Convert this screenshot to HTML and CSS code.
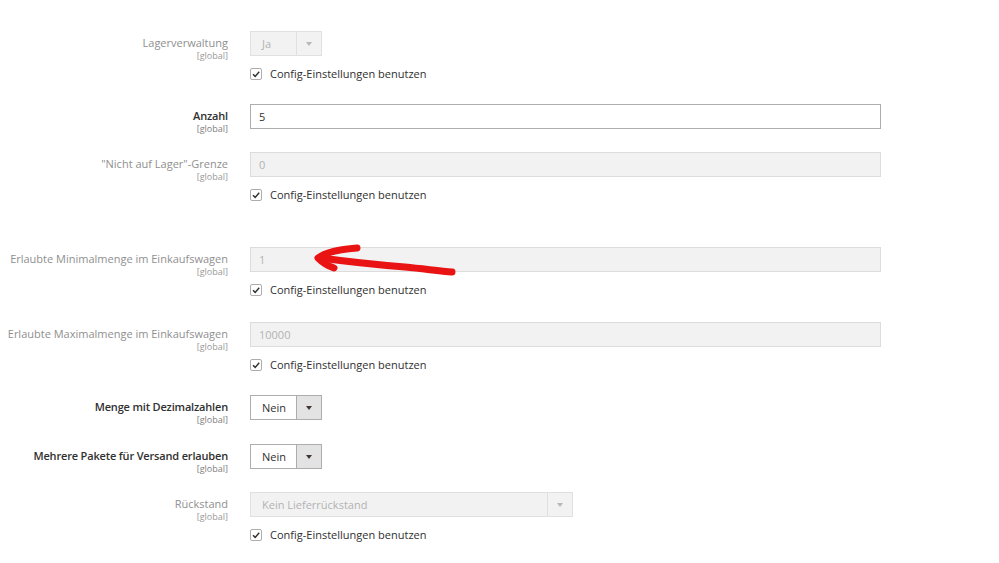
FILE: index.html
```html
<!DOCTYPE html>
<html lang="de">
<head>
<meta charset="utf-8">
<title>Lager</title>
<link rel="stylesheet" href="styles.css">
</head>
<body>
<div class="form">
  <div class="field disabled">
    <div class="label"><span class="title">Lagerverwaltung</span><span class="scope">[global]</span></div>
    <div class="control">
      <div class="select small"><span class="value">Ja</span><span class="arrow"></span></div>
      <label class="use-config"><span class="cb"><svg viewBox="0 0 12 12" width="12" height="12"><path d="M3 6.2 L5.2 8.4 L9.2 3.8" fill="none" stroke="#333" stroke-width="1.5"/></svg></span>Config-Einstellungen benutzen</label>
    </div>
  </div>

  <div class="field">
    <div class="label"><span class="title">Anzahl</span><span class="scope">[global]</span></div>
    <div class="control">
      <div class="input">5</div>
    </div>
  </div>

  <div class="field disabled">
    <div class="label"><span class="title">"Nicht auf Lager"-Grenze</span><span class="scope">[global]</span></div>
    <div class="control">
      <div class="input">0</div>
      <label class="use-config"><span class="cb"><svg viewBox="0 0 12 12" width="12" height="12"><path d="M3 6.2 L5.2 8.4 L9.2 3.8" fill="none" stroke="#333" stroke-width="1.5"/></svg></span>Config-Einstellungen benutzen</label>
    </div>
  </div>

  <div class="field disabled spaced">
    <div class="label"><span class="title">Erlaubte Minimalmenge im Einkaufswagen</span><span class="scope">[global]</span></div>
    <div class="control">
      <div class="input">1</div>
      <label class="use-config"><span class="cb"><svg viewBox="0 0 12 12" width="12" height="12"><path d="M3 6.2 L5.2 8.4 L9.2 3.8" fill="none" stroke="#333" stroke-width="1.5"/></svg></span>Config-Einstellungen benutzen</label>
    </div>
  </div>

  <div class="field disabled nudge2">
    <div class="label"><span class="title">Erlaubte Maximalmenge im Einkaufswagen</span><span class="scope">[global]</span></div>
    <div class="control">
      <div class="input">10000</div>
      <label class="use-config"><span class="cb"><svg viewBox="0 0 12 12" width="12" height="12"><path d="M3 6.2 L5.2 8.4 L9.2 3.8" fill="none" stroke="#333" stroke-width="1.5"/></svg></span>Config-Einstellungen benutzen</label>
    </div>
  </div>

  <div class="field">
    <div class="label"><span class="title">Menge mit Dezimalzahlen</span><span class="scope">[global]</span></div>
    <div class="control">
      <div class="select small"><span class="value">Nein</span><span class="arrow"></span></div>
    </div>
  </div>

  <div class="field nudge1">
    <div class="label"><span class="title">Mehrere Pakete für Versand erlauben</span><span class="scope">[global]</span></div>
    <div class="control">
      <div class="select small"><span class="value">Nein</span><span class="arrow"></span></div>
    </div>
  </div>

  <div class="field disabled">
    <div class="label"><span class="title">Rückstand</span><span class="scope">[global]</span></div>
    <div class="control">
      <div class="select wide"><span class="value">Kein Lieferrückstand</span><span class="arrow"></span></div>
      <label class="use-config"><span class="cb"><svg viewBox="0 0 12 12" width="12" height="12"><path d="M3 6.2 L5.2 8.4 L9.2 3.8" fill="none" stroke="#333" stroke-width="1.5"/></svg></span>Config-Einstellungen benutzen</label>
    </div>
  </div>
</div>

<svg class="annotation" width="999" height="563" viewBox="0 0 999 563">
  <path d="M357 248 C343 249 326 252 318 258 C322 262 328 266 334 268" fill="none" stroke="#ea1313" stroke-width="7" stroke-linecap="round" stroke-linejoin="round"/>
  <path d="M321 258 C350 262 380 265 405 267 C425 269 440 271 452 272" fill="none" stroke="#ea1313" stroke-width="7" stroke-linecap="round"/>
</svg>
</body>
</html>
```

FILE: styles.css
```css
html, body {
  margin: 0;
  padding: 0;
  background: #ffffff;
}

body {
  font-family: "Open Sans", "Liberation Sans", sans-serif;
  font-size: 11px;
  color: #303030;
  width: 999px;
  height: 563px;
  overflow: hidden;
  position: relative;
}

.form {
  display: flex;
  flex-direction: column;
  gap: 23px;
  padding-top: 31px;
}

.field {
  display: grid;
  grid-template-columns: 228px 631px;
  column-gap: 22px;
  align-items: start;
}

.field.spaced {
  margin-top: 22px;
}

.field.nudge2 {
  margin-top: 2px;
}

.field.nudge1 {
  margin-top: 1px;
}

.label {
  display: flex;
  flex-direction: column;
  align-items: flex-end;
  text-align: right;
  padding-top: 5px;
  box-sizing: border-box;
  height: 25px;
}

.title {
  font-size: 11px;
  line-height: 14px;
  font-weight: 600;
  letter-spacing: -0.17px;
  color: #303030;
  white-space: nowrap;
  flex: none;
}

.scope {
  font-size: 9px;
  line-height: 12px;
  color: #808080;
  flex: none;
}

.field.disabled .title {
  font-weight: 400;
  letter-spacing: 0;
  color: #8f8f8f;
}

.field.disabled .scope {
  color: #999999;
}

.control {
  display: flex;
  flex-direction: column;
  align-items: flex-start;
  gap: 11px;
}

.input {
  box-sizing: border-box;
  width: 631px;
  height: 25px;
  line-height: 23px;
  border: 1px solid #adadad;
  background: #ffffff;
  padding: 0 8px;
  color: #303030;
  font-size: 11px;
}

.field.disabled .input {
  background: #f2f2f2;
  border-color: #dcdcdc;
  color: #b3b3b3;
}

.select {
  box-sizing: border-box;
  height: 25px;
  display: flex;
  border: 1px solid #adadad;
  background: #ffffff;
  font-size: 11px;
  color: #303030;
}

.select.small { width: 72px; }
.select.wide { width: 323px; }

.select .value {
  flex: 1;
  line-height: 23px;
  padding-left: 11px;
}

.select .arrow {
  width: 24px;
  border-left: 1px solid #adadad;
  background: #e3e3e3;
  display: flex;
  align-items: center;
  justify-content: center;
}

.select .arrow::after {
  content: "";
  width: 0;
  height: 0;
  border-left: 3px solid transparent;
  border-right: 3px solid transparent;
  border-top: 4px solid #41362f;
}

.field.disabled .select {
  background: #f2f2f2;
  border-color: #e0e0e0;
  color: #b3b3b3;
}

.field.disabled .select .arrow {
  background: #f2f2f2;
  border-left-color: #e0e0e0;
}

.field.disabled .select .arrow::after {
  border-top-color: #b8b8b8;
}

.use-config {
  display: flex;
  align-items: center;
  gap: 8px;
  line-height: 14px;
  font-size: 11px;
  color: #303030;
}

.cb {
  box-sizing: border-box;
  width: 12px;
  height: 12px;
  border: 1px solid #adadad;
  border-radius: 2px;
  background: #ffffff;
  display: flex;
  align-items: center;
  justify-content: center;
}

.cb svg {
  display: block;
  flex: none;
}

.annotation {
  position: absolute;
  left: 0;
  top: 0;
  pointer-events: none;
}
```
